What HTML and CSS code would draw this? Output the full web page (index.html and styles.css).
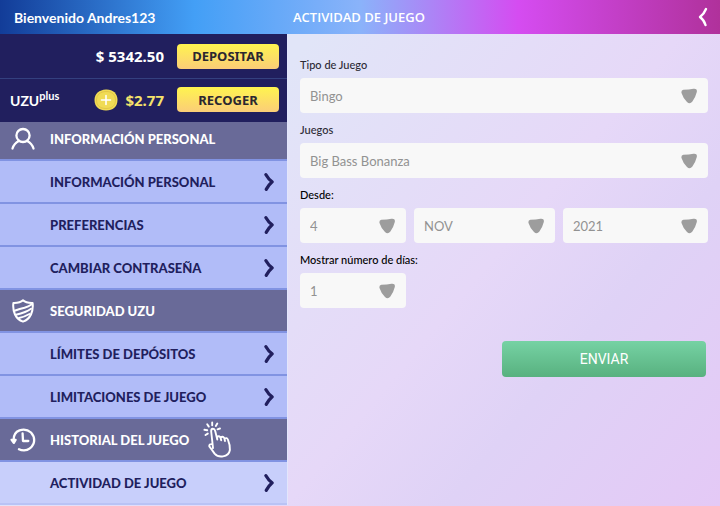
FILE: index.html
```html
<!DOCTYPE html>
<html lang="es">
<head>
    <meta charset="UTF-8">
    <meta name="viewport" content="width=device-width, initial-scale=1.0">
    <title>Actividad de juego</title>
    <link rel="stylesheet" href="styles.css">
</head>
<body>
    <svg class="symbols" width="0" height="0" aria-hidden="true">
        <symbol id="chevron" viewBox="0 0 12 20">
            <path d="M2.8 2.6 Q5.5 7.5 9.2 9.8 Q6 12.5 3.2 17.4" fill="none" stroke="currentColor" stroke-width="3.2" stroke-linecap="round" stroke-linejoin="round"/>
        </symbol>
        <symbol id="arrow" viewBox="0 0 16 16">
            <path d="M2.4 1.8 Q8 1.8 12.5 .8 Q16.4 .4 15.8 4 Q14.6 9 11.4 13.6 Q8.8 16.8 6 14 Q2 10 .5 5 Q0 2 2.4 1.8 Z" fill="#9d9d9d"/>
        </symbol>
    </svg>

    <header class="topbar">
        <p>Bienvenido Andres123</p>
        <h1>ACTIVIDAD DE JUEGO</h1>
        <button class="back" type="button" aria-label="Volver">
            <svg width="10" height="20" viewBox="0 0 10 20"><path d="M8 2 Q6 7 2 10 Q6 13 7.5 18" fill="none" stroke="#fff" stroke-width="2.4" stroke-linecap="round" stroke-linejoin="round"/></svg>
        </button>
    </header>

    <div class="layout">
        <aside class="sidebar">
            <div class="balance">
                <span class="amount">$ 5342.50</span>
                <button class="gold" type="button">DEPOSITAR</button>
            </div>
            <div class="balance">
                <span class="brand">UZU<sup>plus</sup></span>
                <svg class="coin" width="24" height="22" viewBox="0 0 24 22">
                    <path d="M12 .5 C19 .3 23.5 4.5 23.5 11 C23.5 17.5 19 21.5 12 21.5 C5 21.5 .5 17.5 .5 11 C.5 5 5 .7 12 .5 Z" fill="#f0db55"/>
                    <path d="M12 2.5 C18 2.3 21.5 6 21.5 11 C21.5 16.5 18 19.5 12 19.5 C6 19.5 2.5 16.5 2.5 11 C2.5 6 6 2.7 12 2.5 Z" fill="none" stroke="#e3c746"/>
                    <path d="M12 6.5 V15.5 M7.5 11 H16.5" stroke="#fff" stroke-width="1.6" stroke-linecap="round"/>
                </svg>
                <span class="amount plus">$2.77</span>
                <button class="gold" type="button">RECOGER</button>
            </div>

            <nav>
                <h2 class="first">
                    <svg width="26" height="24" viewBox="0 0 26 24" fill="none" stroke="#fff" stroke-width="2.3" stroke-linecap="round"><ellipse cx="13" cy="8.5" rx="6.6" ry="6.5"/><path d="M2.5 21.5 Q4 16.5 8.8 14 M17.2 14 Q22 16.5 23.5 21.5"/></svg>
                    INFORMACIÓN PERSONAL
                </h2>
                <a href="#informacion">INFORMACIÓN PERSONAL <svg class="chevron"><use href="#chevron"/></svg></a>
                <a href="#preferencias">PREFERENCIAS <svg class="chevron"><use href="#chevron"/></svg></a>
                <a href="#contrasena">CAMBIAR CONTRASEÑA <svg class="chevron"><use href="#chevron"/></svg></a>
                <h2>
                    <svg width="26" height="24" viewBox="0 0 26 24" fill="none" stroke="#fff" stroke-width="2" stroke-linecap="round" stroke-linejoin="round"><path d="M13 1.3 Q10 4.2 3.4 4 Q2.6 10 5 15.5 Q7.5 20.8 13 22.6 Q18.5 20.8 21 15.5 Q23.4 10 22.6 4 Q16 4.2 13 1.3 Z"/><path d="M4.5 11.8 Q10 10 14.5 8.8 Q18.5 7.5 21.5 5.5 M6 15.8 Q11 14.6 15 13 Q18.5 11.6 21 9.8 M9 19 Q14.5 17.8 19.5 15"/></svg>
                    SEGURIDAD UZU
                </h2>
                <a href="#depositos">LÍMITES DE DEPÓSITOS <svg class="chevron"><use href="#chevron"/></svg></a>
                <a href="#limitaciones">LIMITACIONES DE JUEGO <svg class="chevron"><use href="#chevron"/></svg></a>
                <h2>
                    <svg width="26" height="24" viewBox="0 0 26 24" fill="none" stroke="#fff" stroke-width="2.3" stroke-linecap="round" stroke-linejoin="round"><path d="M3.5 12.5 Q3.5 4.5 9.5 2.4 Q16 .2 21 4.5 Q25.5 9.5 23.6 15.5 Q20.8 22 14 22.4 Q11 22.4 9 21.3"/><path d="M12.6 5.5 L13 13 H18.3"/><path d="M1.6 11.8 H5.6 L3.8 14.8 Z" fill="#fff"/></svg>
                    HISTORIAL DEL JUEGO
                    <svg width="30" height="38" viewBox="0 0 30 38" fill="none" stroke="#fff" stroke-width="1.9" stroke-linecap="round" stroke-linejoin="round"><path d="M10 27 L8.2 10.5 Q8 8 9.8 7.8 Q11.6 7.7 12.2 10 L14.3 18.5 M14.3 18.5 L14 16.3 Q15.5 14.3 17.4 16.3 L18.2 19.3 M17.6 16.8 Q19.6 14.6 21.3 17 L22 20 M21.5 17.6 Q23.8 16.2 25 18.8 Q27.2 24 26.9 29 Q26 34.5 20 35.4 Q14.8 36.3 11.6 32.6 Q9 28.7 6.3 25.3 Q5.8 22.8 9.4 23.2"/><path d="M9.2 1.5 V4.3 M4.2 3.2 L5.8 5.6 M14.3 2.5 L12.8 5 M1.4 8.8 L4.2 9.3 M2.5 14 L4.8 12.6 M17 7.5 L14.5 8.3"/></svg>
                </h2>
                <a class="active" href="#actividad">ACTIVIDAD DE JUEGO <svg class="chevron"><use href="#chevron"/></svg></a>
            </nav>
        </aside>

        <main>
            <form>
                <label for="tipo">Tipo de Juego</label>
                <div class="select">
                    <select id="tipo"><option>Bingo</option></select>
                    <svg><use href="#arrow"/></svg>
                </div>

                <label for="juegos">Juegos</label>
                <div class="select">
                    <select id="juegos"><option>Big Bass Bonanza</option></select>
                    <svg><use href="#arrow"/></svg>
                </div>

                <label class="dark" for="dia">Desde:</label>
                <div class="date">
                    <div class="select">
                        <select id="dia"><option>4</option></select>
                        <svg><use href="#arrow"/></svg>
                    </div>
                    <div class="select">
                        <select aria-label="Mes"><option>NOV</option></select>
                        <svg><use href="#arrow"/></svg>
                    </div>
                    <div class="select">
                        <select aria-label="Año"><option>2021</option></select>
                        <svg><use href="#arrow"/></svg>
                    </div>
                </div>

                <label class="dark" for="dias">Mostrar número de días:</label>
                <div class="select days">
                    <select id="dias"><option>1</option></select>
                    <svg><use href="#arrow"/></svg>
                </div>

                <button class="send" type="submit">ENVIAR</button>
            </form>
        </main>
    </div>
</body>
</html>
```
FILE: styles.css
```css
* {
    box-sizing: border-box;
}
body {
    margin: 0;
    min-height: 100vh;
    display: flex;
    flex-direction: column;
    font-family: Lato, sans-serif;
    font-size: 13px;
    background: linear-gradient(130deg, #e1e5f8 30%, #e6d8f8 62%, #dfd2f6 76%, #e4c9f6 100%);
}
button {
    font-family: inherit;
    border: none;
    cursor: pointer;
}
.symbols {
    position: absolute;
}
.topbar {
    display: grid;
    grid-template-columns: 40% 1fr auto;
    align-items: center;
    height: 34px;
    color: white;
    background: linear-gradient(90deg, #123c98 0%, #439ff6 27%, #8ab3fa 50%, #d54cf1 72%, #b0319b 100%);
}
.topbar p {
    margin: 0;
    padding-left: 14px;
    font-size: 14px;
    font-weight: bold;
}
.topbar h1 {
    margin: 0;
    padding-left: 5px;
    font-family: "Open Sans", sans-serif;
    font-size: 13px;
    font-weight: 600;
}
.back {
    display: flex;
    padding: 0 12px;
    background: none;
}
.layout {
    flex: 1;
    display: grid;
    grid-template-columns: 2fr 3fr;
    align-items: start;
}
.sidebar {
    border-right: 1px solid #e3e6fc;
}
.balance {
    display: flex;
    align-items: center;
    justify-content: flex-end;
    height: 44px;
    padding: 0 8px 0 10px;
    color: white;
    background-color: #211f5e;
}
.balance + .balance {
    padding-bottom: 2px;
    border-top: 1px solid #34407f;
}
.brand {
    margin-right: auto;
    font-size: 14px;
    font-weight: bold;
}
.brand sup {
    font-size: 11px;
    line-height: 1;
}
.amount {
    font-family: "Noto Sans", sans-serif;
    font-size: 15px;
    font-weight: bold;
}
.plus {
    color: #f5e26b;
}
.coin {
    margin-right: 7px;
}
.gold {
    width: 102px;
    height: 25px;
    margin-left: 13px;
    padding: 0;
    border-radius: 4px;
    font-family: "Noto Sans", sans-serif;
    font-size: 13px;
    font-weight: bold;
    color: #2b2730;
    background: linear-gradient(#fff44f, #fbcd78);
}
nav h2,
nav a {
    display: flex;
    align-items: center;
    height: 43px;
    margin: 0;
    border-bottom: 2px solid #8193e2;
    font-size: 13px;
    font-weight: 900;
}
nav h2 {
    gap: 14px;
    padding-left: 10px;
    color: white;
    background-color: #696a98;
}
nav .first {
    height: 39px;
    padding-bottom: 4px;
}
nav a {
    justify-content: space-between;
    padding: 0 12px 0 50px;
    color: #211f5e;
    background-color: #b1bcf8;
    text-decoration: none;
}
nav .active {
    border-bottom-color: #b9c3f5;
    background-color: #c8cffb;
}
.chevron {
    width: 12px;
    height: 20px;
}
form {
    padding: 21px 12px 16px;
}
label {
    display: block;
    margin: 7px 0 3px;
    font-size: 11px;
    font-weight: 500;
    line-height: 20px;
    color: #2c2a35;
}
label:first-child {
    margin-top: 0;
}
.dark {
    color: #000;
}
.select {
    position: relative;
}
.select svg {
    position: absolute;
    right: 11px;
    top: 10px;
    width: 16px;
    height: 16px;
    pointer-events: none;
}
select {
    appearance: none;
    display: block;
    width: 100%;
    height: 35px;
    padding: 0 32px 0 10px;
    border: none;
    border-radius: 4px;
    font-family: inherit;
    font-size: 13px;
    color: #929292;
    background-color: #f8f8f8;
}
.date {
    display: grid;
    grid-template-columns: 106fr 141fr 145fr;
    gap: 8px;
}
.days {
    width: 26%;
}
.send {
    display: block;
    width: 50%;
    height: 36px;
    margin: 33px 2px 0 auto;
    border-radius: 4px;
    font-family: Roboto, sans-serif;
    font-size: 14px;
    color: white;
    background: linear-gradient(#76d2a4, #58b17f);
}
```
